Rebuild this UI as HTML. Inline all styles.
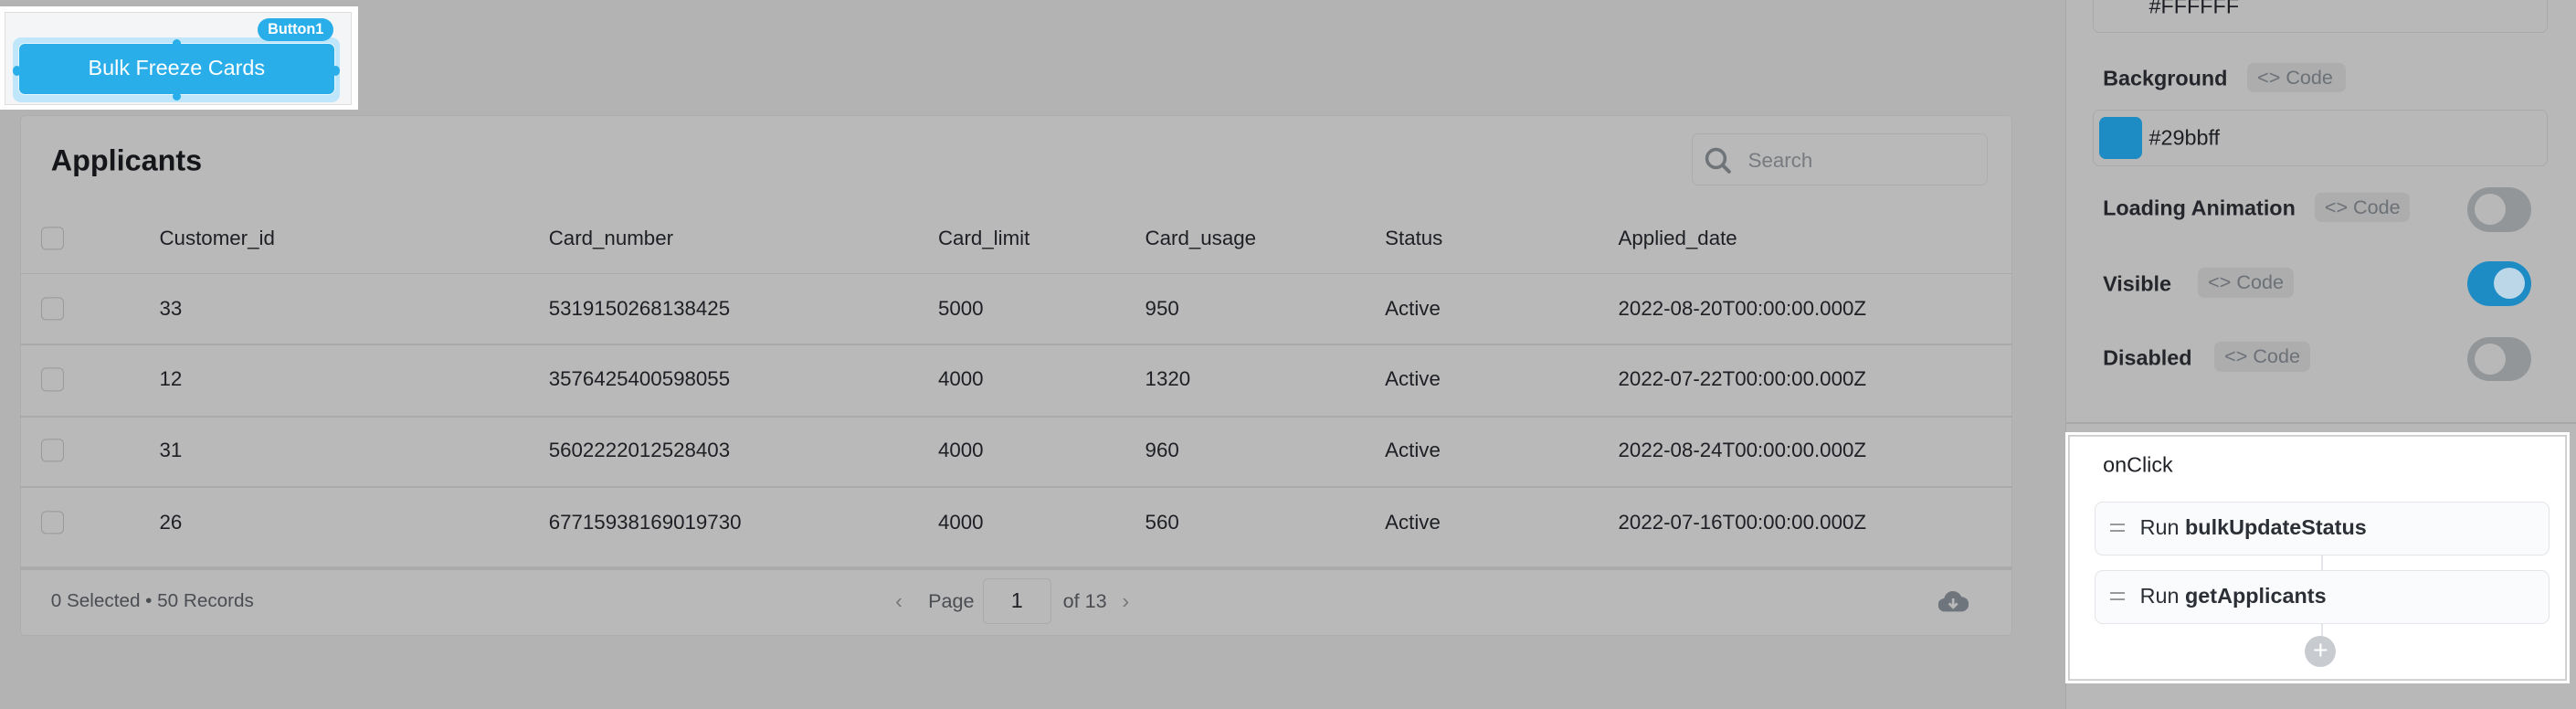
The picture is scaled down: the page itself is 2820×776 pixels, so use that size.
<!DOCTYPE html>
<html><head><meta charset="utf-8"><style>
*{box-sizing:border-box;margin:0;padding:0}
html,body{width:2820px;height:776px;overflow:hidden;background:#b3b3b4}
#r{zoom:1.7985;width:1568px;height:432px;position:relative;font-family:"Liberation Sans",sans-serif;color:#1d1f24}
.a{position:absolute}
.t{position:absolute;font-size:12.4px;white-space:nowrap;transform:translateY(-50%)}
.cb{position:absolute;left:25px;width:14px;height:14px;border:1px solid #999;border-radius:3px;transform:translateY(-50%)}
.hl{position:absolute;left:12px;width:1213px;height:1px;background:#a9a9a9}
.lbl{position:absolute;font-size:13px;font-weight:bold;color:#24262b;transform:translateY(-50%)}
.chip{position:absolute;height:18px;background:#adadad;border-radius:4px;color:#6c7178;font-size:12px;line-height:18px;padding-left:6px;transform:translateY(-50%)}
.tg{position:absolute;width:39px;height:27px;border-radius:14px;background:#939699}
.tg i{position:absolute;top:4px;width:19px;height:19px;border-radius:50%;background:#b8b8b8}
.item{position:absolute;left:1275px;width:277px;height:33px;border:1px solid #e3e5e8;border-radius:5px;background:#fafbfc;font-size:13px;line-height:31px;padding-left:27px;color:#2c2f36}
.item:before{content:"";position:absolute;left:9px;top:13px;width:9px;height:5px;border-top:1.5px solid #999;border-bottom:1.5px solid #999;box-sizing:border-box}
.dot{position:absolute;width:5px;height:5px;border-radius:50%;background:#29aeea}
</style></head><body><div id="r">
<!-- selected button -->
<div class="a" style="left:0;top:4px;width:218px;height:63px;background:#fff"></div>
<div class="a" style="left:3px;top:7px;width:211px;height:57px;background:#f3f5f7;border:1px solid #ddd"></div>
<div class="a" style="left:8px;top:23px;width:199px;height:39px;background:#bfe6fb;border-radius:5px"></div>
<div class="a" style="left:11px;top:26px;width:193px;height:32px;background:#29aeea;border-radius:4px;border:1px solid #e4f5fd;color:#fff;font-size:13px;line-height:30px;text-align:center">Bulk Freeze Cards</div>
<div class="dot" style="left:105px;top:24px"></div>
<div class="dot" style="left:105px;top:56px"></div>
<div class="dot" style="left:8px;top:40px;height:6px"></div>
<div class="dot" style="left:202px;top:40px;height:6px"></div>
<div class="a" style="left:157px;top:11px;width:46px;height:14px;background:#29aeea;border-radius:7px;color:#fff;font-size:9px;font-weight:bold;line-height:14px;text-align:center">Button1</div>
<!-- table card -->
<div class="a" style="left:12px;top:70px;width:1213px;height:317px;background:#b9b9b9;border:1px solid #adadad;border-radius:3px"></div>
<div class="t" style="left:31px;top:98px;font-size:18px;font-weight:bold;color:#15161a">Applicants</div>
<div class="a" style="left:1030px;top:81px;width:180px;height:32px;border:1px solid #adadad;border-radius:4px"></div>
<svg class="a" style="left:1037px;top:89px" width="18" height="18" viewBox="0 0 18 18"><circle cx="7.5" cy="7.5" r="5.5" fill="none" stroke="#6f7479" stroke-width="2"/><path d="M11.5 11.5l4 4" stroke="#6f7479" stroke-width="2.2" stroke-linecap="round"/></svg>
<div class="t" style="left:1064px;top:98px;color:#777b80">Search</div>
<div class="cb" style="top:145px"></div>
<div class="t" style="left:97px;top:145px">Customer_id</div>
<div class="t" style="left:334px;top:145px">Card_number</div>
<div class="t" style="left:571px;top:145px">Card_limit</div>
<div class="t" style="left:697px;top:145px">Card_usage</div>
<div class="t" style="left:843px;top:145px">Status</div>
<div class="t" style="left:985px;top:145px">Applied_date</div>
<div class="hl" style="top:166px"></div>
<div class="cb" style="top:188px"></div><div class="t" style="left:97px;top:188px">33</div><div class="t" style="left:334px;top:188px">5319150268138425</div><div class="t" style="left:571px;top:188px">5000</div><div class="t" style="left:697px;top:188px">950</div><div class="t" style="left:843px;top:188px">Active</div><div class="t" style="left:985px;top:188px">2022-08-20T00:00:00.000Z</div>
<div class="hl" style="top:209px"></div>
<div class="cb" style="top:231px"></div><div class="t" style="left:97px;top:231px">12</div><div class="t" style="left:334px;top:231px">3576425400598055</div><div class="t" style="left:571px;top:231px">4000</div><div class="t" style="left:697px;top:231px">1320</div><div class="t" style="left:843px;top:231px">Active</div><div class="t" style="left:985px;top:231px">2022-07-22T00:00:00.000Z</div>
<div class="hl" style="top:253px"></div>
<div class="cb" style="top:274px"></div><div class="t" style="left:97px;top:274px">31</div><div class="t" style="left:334px;top:274px">5602222012528403</div><div class="t" style="left:571px;top:274px">4000</div><div class="t" style="left:697px;top:274px">960</div><div class="t" style="left:843px;top:274px">Active</div><div class="t" style="left:985px;top:274px">2022-08-24T00:00:00.000Z</div>
<div class="hl" style="top:296px"></div>
<div class="cb" style="top:318px"></div><div class="t" style="left:97px;top:318px">26</div><div class="t" style="left:334px;top:318px">67715938169019730</div><div class="t" style="left:571px;top:318px">4000</div><div class="t" style="left:697px;top:318px">560</div><div class="t" style="left:843px;top:318px">Active</div><div class="t" style="left:985px;top:318px">2022-07-16T00:00:00.000Z</div>
<div class="hl" style="top:345px;height:2px;background:#aaa"></div>
<div class="t" style="left:31px;top:366px;font-size:11.5px;color:#4a4d52">0 Selected • 50 Records</div>
<div class="t" style="left:545px;top:366px;font-size:13px;color:#777">‹</div>
<div class="t" style="left:565px;top:366px;font-size:12px;color:#4a4d52">Page</div>
<div class="a" style="left:598px;top:352px;width:42px;height:28px;border:1px solid #aaa;border-radius:3px;font-size:13px;line-height:26px;text-align:center">1</div>
<div class="t" style="left:647px;top:366px;font-size:12px;color:#4a4d52">of 13</div>
<div class="t" style="left:683px;top:366px;font-size:13px;color:#777">›</div>
<svg class="a" style="left:1180px;top:359px" width="18" height="14" viewBox="0 0 18 14"><path d="M4 13a4 4 0 0 1-.5-8A5.5 5.5 0 0 1 14 4a4.5 4.5 0 0 1 0 9z" fill="#6f757c"/><path d="M9 5v5M6.5 8l2.5 2.5L11.5 8" stroke="#b9b9b9" stroke-width="1.5" fill="none"/></svg>
<!-- right panel -->
<div class="a" style="left:1257px;top:0;width:311px;height:432px;background:#b8b8b8;border-left:1px solid #a6a6a6"></div>
<div class="a" style="left:1274px;top:-4px;width:277px;height:24px;border:1px solid #aaa;border-radius:4px"></div>
<div class="t" style="left:1308px;top:4px;font-size:13px">#FFFFFF</div>
<div class="lbl" style="left:1280px;top:48px">Background</div>
<div class="chip" style="left:1368px;top:47px;width:60px">&lt;&gt; Code</div>
<div class="a" style="left:1274px;top:67px;width:277px;height:34px;border:1px solid #aaa;border-radius:4px"></div>
<div class="a" style="left:1278px;top:71px;width:26px;height:26px;border-radius:4px;background:#1d8cc4"></div>
<div class="t" style="left:1308px;top:84px;font-size:13px">#29bbff</div>
<div class="lbl" style="left:1280px;top:127px">Loading Animation</div>
<div class="chip" style="left:1409px;top:126px;width:58px">&lt;&gt; Code</div>
<div class="tg" style="left:1502px;top:114px"><i style="left:4px"></i></div>
<div class="lbl" style="left:1280px;top:173px">Visible</div>
<div class="chip" style="left:1338px;top:172px;width:58px">&lt;&gt; Code</div>
<div class="tg" style="left:1502px;top:159px;background:#1d8cc4"><i style="left:16px;background:#bcd8e8"></i></div>
<div class="lbl" style="left:1280px;top:218px">Disabled</div>
<div class="chip" style="left:1348px;top:217px;width:58px">&lt;&gt; Code</div>
<div class="tg" style="left:1502px;top:205px"><i style="left:4px"></i></div>
<div class="a" style="left:1257px;top:257px;width:311px;height:1px;background:#a8a8a8"></div>
<div class="a" style="left:1257px;top:263px;width:307px;height:153px;background:#fff;border:2px solid #fff;box-shadow:inset 0 0 0 1px #ccc"></div>
<div class="t" style="left:1280px;top:283px;font-size:13px">onClick</div>
<div class="a" style="left:1413px;top:338px;width:1px;height:10px;background:#e3e5e8"></div>
<div class="item" style="top:305px">Run <b>bulkUpdateStatus</b></div>
<div class="item" style="top:347px">Run <b>getApplicants</b></div>
<div class="a" style="left:1413px;top:380px;width:1px;height:8px;background:#e3e5e8"></div>
<div class="a" style="left:1403px;top:387px;width:19px;height:19px;border-radius:50%;background:#c8ccd1;color:#fff;font-size:16px;line-height:18px;text-align:center">+</div>
</div></body></html>
